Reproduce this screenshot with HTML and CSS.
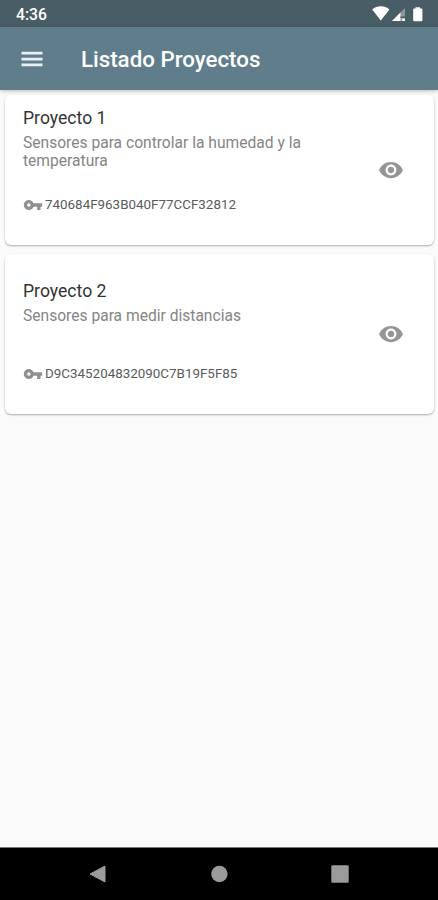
FILE: index.html
```html
<!DOCTYPE html>
<html lang="es">
<head>
  <meta charset="UTF-8" />
  <meta name="viewport" content="width=device-width, initial-scale=1.0" />
  <title>Listado Proyectos</title>
  <link rel="stylesheet" href="styles.css">
</head>
<body>

<div class="screen">
  <div class="status-bar">
    <span class="clock">4:36</span>
    <svg class="status-icons" width="54" height="20" viewBox="0 0 54 20">
      <path d="M1.2 5.6C6 1.2 13.6 1.2 18.4 5.6L9.8 16.6z" fill="#fff" />
      <path d="M34 4v13H21z" fill="#8b989f" />
      <path d="M29.500 8.500V17H21z" fill="#fff" />
      <path d="M29.500 12.500h4.500v1.500h-4.500z" fill="#495d67" />
      <path d="M31.200 14.500h2.600v2.500h-2.600z" fill="#fff" />
      <path d="M44.500 3.200h4.500v1.400h1.400q1 0 1 1v10.600q0 1-1 1h-7.200q-1 0-1-1V5.600q0-1 1-1h1.300z" fill="#fff" />
    </svg>
  </div>

  <div class="app-bar">
    <svg class="menu-icon" viewBox="0 0 24 24"><path d="M3 18.200h18v-2.300H3v2.300zm0-5h18v-2.300H3v2.300zm0-7.400v2.300h18V5.800H3z" /></svg>
    <h1>Listado Proyectos</h1>
  </div>

  <div class="project-list">
    <div class="card">
      <div class="card-info">
        <h2>Proyecto 1</h2>
        <p>Sensores para controlar la humedad y la temperatura</p>
        <div class="card-key">
          <svg class="key-icon" viewBox="0 0 24 24"><path d="M12.650 10C11.830 7.670 9.610 6 7 6c-3.310 0-6 2.690-6 6s2.690 6 6 6c2.610 0 4.830-1.670 5.650-4H17v4h4v-4h2v-4H12.650zM7 14c-1.100 0-2-.9-2-2s.9-2 2-2 2 .9 2 2-.9 2-2 2z" /></svg>
          <span>740684F963B040F77CCF32812</span>
        </div>
      </div>
      <svg class="eye-icon" viewBox="0 0 24 24"><path d="M12 4.500C7 4.500 2.730 7.610 1 12c1.730 4.390 6 7.500 11 7.500s9.270-3.110 11-7.500c-1.730-4.390-6-7.500-11-7.500zM12 17c-2.760 0-5-2.240-5-5s2.240-5 5-5 5 2.240 5 5-2.240 5-5 5zm0-8c-1.660 0-3 1.340-3 3s1.340 3 3 3 3-1.340 3-3-1.340-3-3-3z" /></svg>
    </div>

    <div class="card card-tall">
      <div class="card-info">
        <h2>Proyecto 2</h2>
        <p>Sensores para medir distancias</p>
        <div class="card-key">
          <svg class="key-icon" viewBox="0 0 24 24"><path d="M12.650 10C11.830 7.670 9.610 6 7 6c-3.310 0-6 2.690-6 6s2.690 6 6 6c2.610 0 4.830-1.670 5.650-4H17v4h4v-4h2v-4H12.650zM7 14c-1.100 0-2-.9-2-2s.9-2 2-2 2 .9 2 2-.9 2-2 2z" /></svg>
          <span>D9C345204832090C7B19F5F85</span>
        </div>
      </div>
      <svg class="eye-icon" viewBox="0 0 24 24"><path d="M12 4.500C7 4.500 2.730 7.610 1 12c1.730 4.390 6 7.500 11 7.500s9.270-3.110 11-7.500c-1.730-4.390-6-7.500-11-7.500zM12 17c-2.760 0-5-2.240-5-5s2.240-5 5-5 5 2.240 5 5-2.240 5-5 5zm0-8c-1.660 0-3 1.340-3 3s1.340 3 3 3 3-1.340 3-3-1.340-3-3-3z" /></svg>
    </div>
  </div>

  <div class="nav-bar">
    <svg width="18" height="20" viewBox="0 0 18 20"><path d="M16 2v16L1 10z" stroke-linejoin="round" stroke-width="1" /></svg>
    <svg width="18" height="18" viewBox="0 0 18 18"><circle cx="9.400" cy="9" r="8.200" /></svg>
    <svg width="18" height="18" viewBox="0 0 18 18"><rect x="0.300" y="0.300" width="17.400" height="17.400" rx="1" /></svg>
  </div>
</div>

</body>
</html>
```

FILE: styles.css
```css
* {
  box-sizing: border-box;
}

body, html {
  margin: 0;
  padding: 0;
  height: 100%;
  overflow: hidden;
  font-family: Roboto, sans-serif;
  background: #fafafa;
}

h1, h2, p {
  margin: 0;
}

svg {
  display: block;
  flex: none;
}

.screen {
  display: flex;
  flex-direction: column;
  height: 100vh;
}

.status-bar {
  display: flex;
  align-items: center;
  justify-content: space-between;
  height: 27px;
  padding: 1px 13px 0 16px;
  background: #495d67;
  color: #fff;
}

.clock {
  font-size: 15.7px;
  font-weight: 500;
}

.app-bar {
  display: flex;
  align-items: center;
  gap: 35px;
  height: 63px;
  padding-left: 18px;
  background: #607d8b;
  color: #fff;
  box-shadow: 0 1px 4px rgba(0,0,0,0.25);
}

.app-bar h1 {
  font-size: 22.3px;
  font-weight: 500;
}

.menu-icon {
  width: 28px;
  height: 28px;
  fill: #e9f0f3;
}

.project-list {
  flex: 1;
  display: flex;
  flex-direction: column;
  gap: 9px;
  padding: 5px 4px 0 5px;
}

.card {
  display: flex;
  align-items: center;
  justify-content: space-between;
  height: 150px;
  padding: 0 30px 0 18px;
  background: #fff;
  border-radius: 6px;
  box-shadow: 0 1px 2px rgba(0,0,0,0.32);
}

.card-tall {
  height: 160px;
}

.card-info {
  width: 300px;
  padding-bottom: 19px;
}

.card-tall .card-info {
  padding-bottom: 4px;
}

.card h2 {
  font-size: 17.6px;
  font-weight: 400;
  line-height: 22px;
  color: #333;
}

.card p {
  margin-top: 5px;
  font-size: 15.6px;
  line-height: 18px;
  color: #858585;
}

.card-key {
  display: flex;
  align-items: center;
  gap: 2px;
  margin-top: 25px;
  font-size: 13.4px;
  line-height: 20px;
  color: #5a5a5a;
}

.card-tall .card-key {
  margin-top: 39px;
}

.key-icon {
  width: 20px;
  height: 20px;
  fill: #909090;
}

.eye-icon {
  width: 26px;
  height: 26px;
  margin-bottom: 1px;
  fill: #959595;
}

.nav-bar {
  display: flex;
  align-items: center;
  justify-content: space-between;
  height: 53px;
  padding: 0 89px;
  background: #000;
  border-top: 1px solid #777;
  fill: #9b9b9b;
  stroke: #9b9b9b;
  stroke-width: 0;
}
```
